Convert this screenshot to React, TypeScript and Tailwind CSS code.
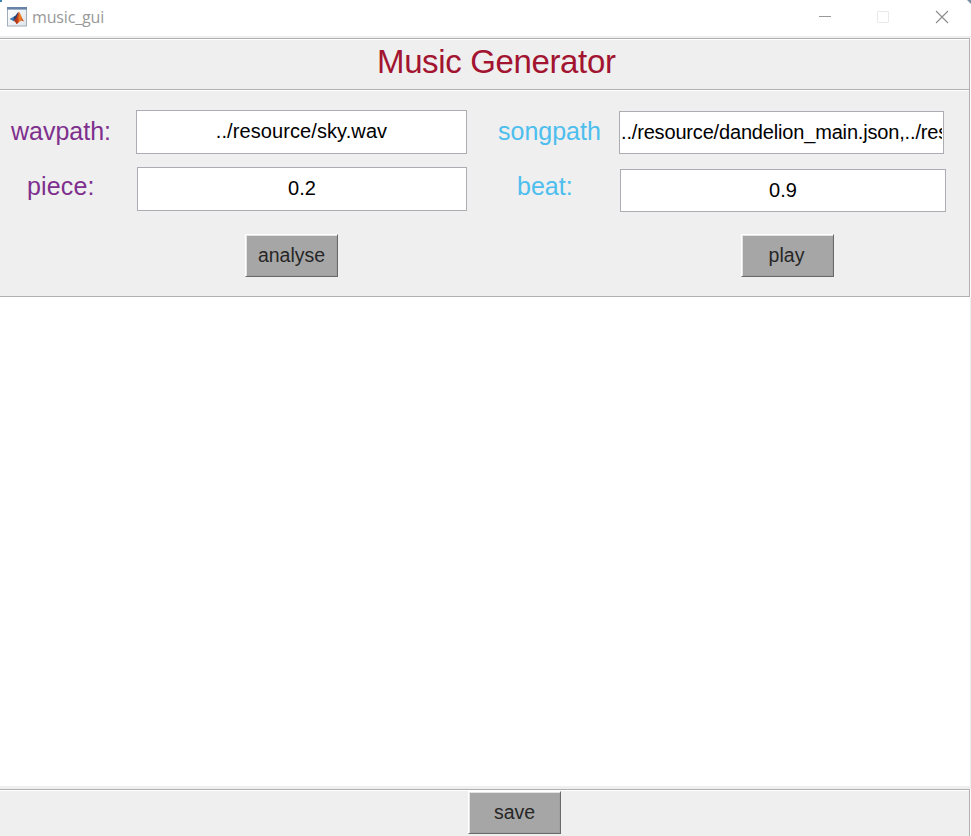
import React from "react";

function MatlabIcon() {
  return (
    <svg width="20" height="20" viewBox="0 0 20 20" className="ml-[7px] mt-[7px] shrink-0">
      <defs>
        <linearGradient id="paper" x1="0" y1="0" x2="1" y2="1">
          <stop offset="0" stopColor="#ffffff" />
          <stop offset="1" stopColor="#dfe4ea" />
        </linearGradient>
        <linearGradient id="peak" x1="0" y1="0" x2="1" y2="0">
          <stop offset="0" stopColor="#7d1d12" />
          <stop offset="0.4" stopColor="#c8401b" />
          <stop offset="0.6" stopColor="#f08a2c" />
          <stop offset="1" stopColor="#b0300f" />
        </linearGradient>
      </defs>
      <rect x="0.5" y="0.5" width="19" height="18.5" fill="url(#paper)" stroke="#a3aebc" />
      <rect x="0" y="0" width="20" height="2.6" fill="#6784a8" />
      <path d="M2.5 12 L7 9.6 L9 10.5 L6.3 14 Z" fill="#3d7fb5" />
      <path d="M7 9.6 C9 9 10 5.5 11.7 5 L10.3 11 L6.3 14 Z" fill="#29426f" />
      <path d="M11.7 5 C13.5 5 14.6 11.5 17.3 14.6 C15.4 13.3 14 13.6 12.8 14.5 C11.5 15.5 10.5 17 9.3 17 C8.8 15 7.7 14 6.3 14 C9 13 10.5 8 11.7 5 Z" fill="url(#peak)" />
    </svg>
  );
}

function TitleBar() {
  return (
    <header className="relative flex h-9 shrink-0 bg-white">
      <MatlabIcon />
      <span className="ml-[5px] mt-[5px] font-['Open_Sans','Noto_Sans',sans-serif] text-[16px] leading-6 tracking-[-0.15px] text-[#999999]">
        music_gui
      </span>
      <svg className="ml-auto shrink-0" width="165" height="36" viewBox="0 0 165 36" fill="none">
        <path d="M13 16.5H25" stroke="#999999" />
        <rect x="71.5" y="11.5" width="11" height="11" rx="0.5" stroke="#e9e9e9" />
        <path d="M130 11L142 23M142 11L130 23" stroke="#8c8c8c" strokeWidth="1.1" />
        <path d="M161 0H165V4Z" fill="#7890a5" />
      </svg>
      <div className="absolute left-0 top-0 h-[2px] w-[2px] bg-[#3c83ad]" />
    </header>
  );
}

function Field({ value, className }: { value: string; className: string }) {
  return (
    <div className={"flex shrink-0 overflow-hidden whitespace-nowrap border border-[#abadb3] bg-white pl-px pr-px text-[20px] leading-[40px] text-black " + className}>
      <div className="min-w-0 flex-1 overflow-hidden">{value}</div>
    </div>
  );
}

function PushButton({ label, className }: { label: string; className: string }) {
  return (
    <button className={"h-[43px] w-[93px] shrink-0 border border-b-[#696969] border-l-white border-r-[#696969] border-t-white bg-[#a6a6a6] text-center text-[19.5px] leading-[41px] text-[#262626] shadow-[inset_1px_1px_0_#e3e3e3,inset_-1px_-1px_0_#a0a0a0] " + className}>
      {label}
    </button>
  );
}

export default function App() {
  return (
    <main className="flex h-[836px] w-[971px] flex-col overflow-hidden bg-white font-['Liberation_Sans',Arial,sans-serif]">
      <TitleBar />
      <div className="h-[2px] shrink-0 bg-[#efefef]" />
      <section className="mr-px flex h-[52px] shrink-0 border-y border-r border-[#b0b0b0] bg-[#efefef] shadow-[inset_0_1px_0_white]">
        <h1 className="ml-[377px] mt-[4px] whitespace-nowrap text-[33px] leading-[38px] tracking-[-0.36px] text-[#a2142f]">Music Generator</h1>
      </section>
      <section className="mr-px h-[207px] shrink-0 border-b border-r border-[#b0b0b0] bg-[#efefef] shadow-[inset_0_1px_0_white]">
        <div className="flex h-[77px] items-start pt-5 text-[25px] leading-[43px]">
          <label className="ml-[11px] w-[125px] text-[#7e2f8e]">wavpath:</label>
          <Field value="../resource/sky.wav" className="h-[44px] w-[331px] pr-[3px] text-center tracking-[0.09px]" />
          <label className="ml-[31px] w-[121px] text-[#4dbeee]">songpath</label>
          <Field value="../resource/dandelion_main.json,../res" className="mt-px h-[43px] w-[325px] tracking-[-0.17px]" />
        </div>
        <div className="flex h-[67px] items-start text-[25px] leading-[39px]">
          <label className="ml-[27px] w-[110px] tracking-[0.15px] text-[#7e2f8e]">piece:</label>
          <Field value="0.2" className="h-[44px] w-[330px] pr-[3px] text-center" />
          <label className="ml-[50px] w-[103px] text-[#4dbeee]">beat:</label>
          <Field value="0.9" className="mt-[2px] h-[43px] w-[326px] pr-[3px] text-center" />
        </div>
        <div className="flex">
          <PushButton label="analyse" className="ml-[245px]" />
          <PushButton label="play" className="ml-[403px] pr-[2px]" />
        </div>
      </section>
      <div className="h-[489px] shrink-0 border-r border-[#efefef] bg-white" />
      <div className="h-[3px] shrink-0 bg-[#efefef]" />
      <footer className="mr-px flex h-[47px] shrink-0 border-r border-t border-[#b0b0b0] bg-[#efefef] pt-px shadow-[inset_0_1px_0_white]">
        <PushButton label="save" className="ml-[468px]" />
      </footer>
    </main>
  );
}
